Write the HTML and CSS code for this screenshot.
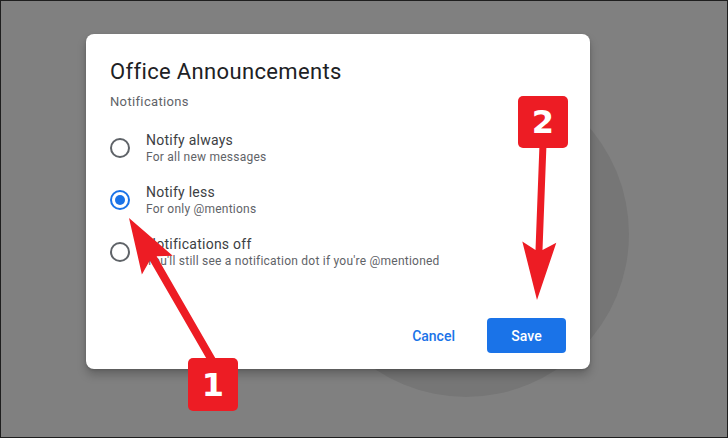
FILE: index.html
```html
<!DOCTYPE html>
<html lang="en">
<head>
<meta charset="UTF-8">
<meta name="viewport" content="width=device-width, initial-scale=1.0">
<title>Office Announcements - Notifications</title>
<link rel="stylesheet" href="styles.css">
</head>
<body>
<div class="screen">
  <div class="backdrop-circle"></div>

  <div class="dialog">
    <h1 class="dialog-title">Office Announcements</h1>
    <p class="dialog-subtitle">Notifications</p>

    <div class="options">
      <div class="option">
        <span class="radio"></span>
        <div class="option-text">
          <div class="option-label">Notify always</div>
          <div class="option-hint">For all new messages</div>
        </div>
      </div>
      <div class="option">
        <span class="radio checked"></span>
        <div class="option-text">
          <div class="option-label">Notify less</div>
          <div class="option-hint">For only @mentions</div>
        </div>
      </div>
      <div class="option">
        <span class="radio"></span>
        <div class="option-text">
          <div class="option-label">Notifications off</div>
          <div class="option-hint">You'll still see a notification dot if you're @mentioned</div>
        </div>
      </div>
    </div>

    <div class="actions">
      <button class="btn btn-text">Cancel</button>
      <button class="btn btn-primary">Save</button>
    </div>
  </div>

  <!-- annotation arrows -->
  <svg class="arrows" width="728" height="438" viewBox="0 0 728 438">
    <path d="M129 218 L172.7 255.8 L156.6 256.2 L216.4 359.9 L209.6 364.1 L149.8 260.4 L141.9 274.4 Z" fill="#ed1c24"/>
    <path d="M537 300 L556.3 242.8 L542.5 250.1 L546.5 144 L539.5 144 L535.5 249.9 L522.3 241.4 Z" fill="#ed1c24"/>
  </svg>
  <div class="badge badge-one">1</div>
  <div class="badge badge-two">2</div>
</div>
</body>
</html>
```

FILE: styles.css
```css
* {
  box-sizing: border-box;
}

body {
  margin: 0;
  padding: 0;
  font-family: Roboto, 'Noto Sans', sans-serif;
}

.screen {
  position: relative;
  width: 728px;
  height: 438px;
  overflow: hidden;
  background-color: #808080;
  border: 1px solid #1e1e1e;
  padding: 33px 0 0 85px;
}

.backdrop-circle {
  position: absolute;
  left: 302px;
  top: 70px;
  width: 326px;
  height: 326px;
  border-radius: 50%;
  background-color: #767676;
}

.dialog {
  position: relative;
  width: 504px;
  height: 335px;
  background-color: #ffffff;
  border-radius: 8px;
  box-shadow: 0 6px 10px rgba(0, 0, 0, 0.22), 0 1px 3px rgba(0, 0, 0, 0.15);
  padding: 24px 24px 16px 24px;
  display: flex;
  flex-direction: column;
}

.dialog-title {
  margin: 0;
  font-size: 22px;
  line-height: 28px;
  font-weight: 400;
  letter-spacing: 0.35px;
  color: #202124;
}

.dialog-subtitle {
  margin: 8px 0 0 0;
  font-size: 13px;
  line-height: 16px;
  letter-spacing: 0.35px;
  color: #5f6368;
}

.options {
  margin-top: 20px;
  display: flex;
  flex-direction: column;
  gap: 18px;
}

.option {
  display: flex;
  align-items: center;
  gap: 16px;
}

.radio {
  width: 20px;
  height: 20px;
  border: 2px solid #5f6368;
  border-radius: 50%;
  margin-top: 2px;
  display: flex;
  align-items: center;
  justify-content: center;
}

.radio.checked {
  border-color: #1a73e8;
}

.radio.checked::after {
  content: "";
  width: 10px;
  height: 10px;
  border-radius: 50%;
  background-color: #1a73e8;
}

.option-label {
  font-size: 14px;
  line-height: 20px;
  letter-spacing: 0.25px;
  color: #3c4043;
}

.option-hint {
  font-size: 12px;
  line-height: 14px;
  letter-spacing: 0.23px;
  color: #5f6368;
}

.actions {
  margin-top: auto;
  display: flex;
  justify-content: flex-end;
  gap: 15px;
}

.btn {
  height: 35px;
  border: none;
  border-radius: 4px;
  font-family: Roboto, 'Noto Sans', sans-serif;
  font-size: 14px;
  font-weight: 500;
  cursor: pointer;
}

.btn-text {
  background: none;
  color: #1a73e8;
  padding: 0 17px;
}

.btn-primary {
  width: 79px;
  background-color: #1a73e8;
  color: #ffffff;
}

.arrows {
  position: absolute;
  left: -1px;
  top: -1px;
}

.badge {
  position: absolute;
  width: 50px;
  height: 52px;
  background-color: #ed1c24;
  border-radius: 5px;
  color: #ffffff;
  font-family: 'DejaVu Sans', sans-serif;
  font-weight: bold;
  font-size: 32px;
  display: flex;
  align-items: center;
  justify-content: center;
}

.badge-one {
  left: 187px;
  top: 357px;
  height: 53px;
}

.badge-two {
  left: 517px;
  top: 95px;
}
```
